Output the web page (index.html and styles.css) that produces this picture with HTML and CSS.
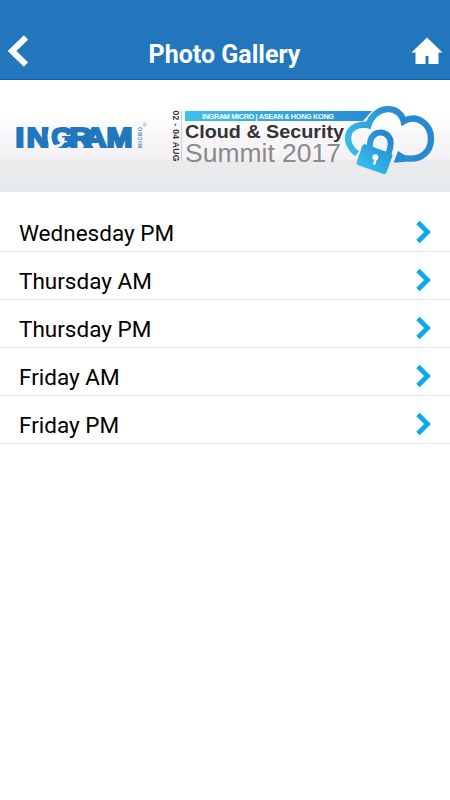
FILE: index.html
```html
<!DOCTYPE html>
<html lang="en">
<head>
    <meta charset="UTF-8">
    <meta name="viewport" content="width=device-width, initial-scale=1.0">
    <title>Photo Gallery</title>
    <link rel="stylesheet" href="styles.css">
</head>
<body>

    <header class="topbar">
        <a class="back" href="#" aria-label="Back">
            <svg width="22" height="32" viewBox="0 0 22 32"><path d="M20 2.5L6 16l14 13.5" fill="none" stroke="#fff" stroke-width="6"/></svg>
        </a>
        <h1>Photo Gallery</h1>
        <a class="home" href="#" aria-label="Home">
            <svg width="32" height="28" viewBox="0 0 32 28"><path d="M16 .5L.5 15.5h4V27h10v-8h3v8h10V15.5h4z" fill="#fff"/></svg>
        </a>
    </header>

    <div class="banner">
        <svg width="450" height="112" viewBox="0 80 450 112">
            <defs>
                <linearGradient id="strip" x1="0" x2="1" y1="0" y2="0">
                    <stop offset="0" stop-color="#3fc0ed"/>
                    <stop offset="1" stop-color="#278bd3"/>
                </linearGradient>
                <linearGradient id="cloud" gradientUnits="userSpaceOnUse" x1="30" y1="150" x2="200" y2="90">
                    <stop offset="0" stop-color="#38bdeb"/>
                    <stop offset="1" stop-color="#2789d0"/>
                </linearGradient>
                <linearGradient id="lock" gradientUnits="userSpaceOnUse" x1="75" y1="225" x2="160" y2="120">
                    <stop offset="0" stop-color="#36c3f0"/>
                    <stop offset="1" stop-color="#2886cf"/>
                </linearGradient>
            </defs>

            <!-- Ingram Micro -->
            <text class="ingram" transform="scale(1.15 1)" y="147" x="13.6 23.2 43.8 60.4 73 92.6">INGRAM</text>
            <path d="M54 125q-9 11 0 24" fill="none" stroke="#fbf9fb" stroke-width="4"/>
            <path d="M54 146.5q10 0 9-9" fill="none" stroke="#fbf9fb" stroke-width="3"/>
            <text class="micro" transform="translate(141.8 148) rotate(-90)" textLength="21">MICRO</text>
            <text class="reg" x="142.8" y="127">®</text>

            <!-- summit title -->
            <text class="date" transform="translate(172.6 110.5) rotate(90)" textLength="51">02 - 04 AUG</text>
            <path d="M181.5 111v50" stroke="#d2d2d4"/>
            <path d="M185 111h187l-9 10H185z" fill="url(#strip)"/>
            <text class="region" x="202" y="118.7" textLength="132">INGRAM MICRO | ASEAN &amp; HONG KONG</text>
            <text class="event" x="185" y="138" textLength="159" lengthAdjust="spacingAndGlyphs">Cloud &amp; Security</text>
            <text class="summit" x="185" y="161.5" textLength="156" lengthAdjust="spacingAndGlyphs">Summit 2017</text>

            <!-- cloud and padlock -->
            <g transform="translate(335 96) scale(.3333)">
                <path d="M66 173C25 142 30 88 88 86Q94 86 100 88C118 27 194 24 206 76C248 51 288 87 288 128C288 168 258 190 224 188Q208 188 192 182" fill="none" stroke="url(#cloud)" stroke-width="19"/>
                <path d="M189 165l-13 35 36-3v-18z" fill="#278bd3"/>
                <path d="M105 153C100 95 169 99 167 143Q167 155 160 174" fill="none" stroke="url(#lock)" stroke-width="18"/>
                <path d="M91 145l76 27q7 3 5 9l-17 48q-3 7-10 5l-75-26q-7-3-5-9l16-48q3-8 10-6z" fill="url(#lock)"/>
                <path d="M123 187l-6 19" stroke="#fff" stroke-width="7"/>
                <circle cx="121" cy="184" r="9" fill="#fff"/>
            </g>
        </svg>
    </div>

    <ul class="gallery">
        <li><a href="#">Wednesday PM<svg class="chevron" viewBox="0 0 16 24"><path d="M3 2.5L12.5 12 3 21.5"/></svg></a></li>
        <li><a href="#">Thursday AM<svg class="chevron" viewBox="0 0 16 24"><path d="M3 2.5L12.5 12 3 21.5"/></svg></a></li>
        <li><a href="#">Thursday PM<svg class="chevron" viewBox="0 0 16 24"><path d="M3 2.5L12.5 12 3 21.5"/></svg></a></li>
        <li><a href="#">Friday AM<svg class="chevron" viewBox="0 0 16 24"><path d="M3 2.5L12.5 12 3 21.5"/></svg></a></li>
        <li><a href="#">Friday PM<svg class="chevron" viewBox="0 0 16 24"><path d="M3 2.5L12.5 12 3 21.5"/></svg></a></li>
    </ul>

</body>
</html>
```
FILE: styles.css
```css
body {
    margin: 0;
    font-family: Roboto, sans-serif;
    background: #fff;
    color: #000;
}

svg {
    display: block;
}

.topbar {
    display: flex;
    justify-content: space-between;
    align-items: center;
    height: 80px;
    box-sizing: border-box;
    padding: 23px 7px 0 6px;
    background: #2276bc;
    border-bottom: 1px solid #0d62af;
}

.topbar h1 {
    margin: 7px 0 0;
    font-size: 25px;
    line-height: 28px;
    font-weight: bold;
    color: #fff;
}

.back {
    width: 32px;
    margin-bottom: 1px;
}

.banner {
    height: 112px;
    background: linear-gradient(#fff 0%, #fff 32%, #f8f6f9 50%, #f5f2f6 70%, #ebebed 72%, #e9eaec 90%, #e3e8eb 100%);
}

.banner text {
    font-family: "Liberation Sans", Arial, sans-serif;
    font-weight: bold;
}

.banner .ingram {
    font-size: 27px;
    fill: #2077be;
    stroke: #2077be;
    stroke-width: 2.2px;
}

.banner .micro {
    font-size: 5.6px;
    fill: #4b91ca;
}

.banner .reg {
    font-size: 5px;
    font-weight: normal;
    fill: #4b91ca;
}

.banner .date {
    font-size: 8.6px;
    fill: #333;
}

.banner .region {
    font-size: 7.3px;
    fill: #fff;
}

.banner .event {
    font-size: 18.5px;
    fill: #333335;
}

.banner .summit {
    font-size: 25px;
    font-weight: normal;
    fill: #8b8b8d;
}

.gallery {
    list-style: none;
    margin: 0;
    padding: 12px 0 0;
}

.gallery a {
    display: flex;
    justify-content: space-between;
    align-items: center;
    height: 48px;
    box-sizing: border-box;
    padding: 11px 19px 0 19px;
    border-bottom: 1px solid #e9e9e9;
    font-size: 22.5px;
    color: #000;
    text-decoration: none;
}

.chevron {
    width: 16px;
    height: 24px;
    margin-bottom: 3px;
    fill: none;
    stroke: #08aaec;
    stroke-width: 4.8px;
}
```
